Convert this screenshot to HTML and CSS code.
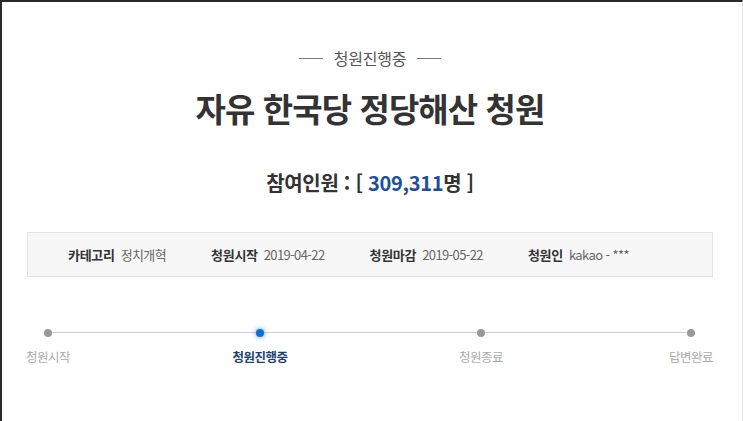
FILE: index.html
```html
<!DOCTYPE html>
<html lang="ko">
<head>
<meta charset="utf-8">
<title>청원진행중</title>
<link rel="stylesheet" href="styles.css">
</head>
<body>
<div class="frame">
  <div class="status"><span class="dash"></span><span class="status-text">청원진행중</span><span class="dash"></span></div>
  <h1 class="title">자유 한국당 정당해산 청원</h1>
  <p class="count">참여인원 : [ <span class="num">309,311</span>명 ]</p>
  <div class="info">
    <div class="item"><span class="lbl">카테고리</span><span class="val">정치개혁</span></div>
    <div class="item"><span class="lbl">청원시작</span><span class="val">2019-04-22</span></div>
    <div class="item"><span class="lbl">청원마감</span><span class="val">2019-05-22</span></div>
    <div class="item"><span class="lbl">청원인</span><span class="val">kakao - ***</span></div>
  </div>
  <div class="timeline">
    <div class="step"><span class="dot"></span><span class="step-lbl">청원시작</span></div>
    <div class="step step-2 active"><span class="dot"></span><span class="step-lbl">청원진행중</span></div>
    <div class="step step-3"><span class="dot"></span><span class="step-lbl">청원종료</span></div>
    <div class="step step-4"><span class="dot"></span><span class="step-lbl">답변완료</span></div>
  </div>
</div>
</body>
</html>
```
FILE: styles.css
```css
html, body {
  margin: 0;
  padding: 0;
  background: #fff;
}
body {
  font-family: "Noto Sans CJK KR", "Noto Sans", sans-serif;
  color: #333;
}
.frame {
  box-sizing: border-box;
  width: 743px;
  height: 421px;
  border-top: 2px solid #2a2a2a;
  border-left: 2px solid #2a2a2a;
  border-right: 1px solid #e6e6e6;
  padding-top: 46px;
  overflow: hidden;
}
.status {
  display: flex;
  justify-content: center;
  align-items: center;
  gap: 11px;
  height: 20px;
  margin-left: -4px;
}
.dash {
  width: 24px;
  height: 1px;
  background: #777;
}
.status-text {
  font-size: 16px;
  line-height: 20px;
  color: #555;
  letter-spacing: -0.2px;
}
.title {
  margin: 20px 0 0;
  text-align: center;
  font-size: 33px;
  line-height: 40px;
  font-weight: 700;
  color: #333;
  letter-spacing: -0.9px;
  margin-left: -4px;
}
.count {
  margin: 41px 0 0;
  text-align: center;
  font-size: 20px;
  line-height: 28px;
  font-weight: 700;
  color: #333;
  letter-spacing: -0.3px;
  margin-left: -4px;
}
.num {
  color: #1c4f9e;
}
.info {
  box-sizing: border-box;
  margin: 35px 0 0 25px;
  width: 686px;
  height: 45px;
  background: #f7f7f7;
  border: 1px solid #e3e3e3;
  display: flex;
  align-items: center;
  gap: 45px;
  padding-left: 40px;
  font-size: 13px;
  letter-spacing: -0.3px;
}
.item {
  display: flex;
  gap: 6px;
  align-items: baseline;
}
.lbl {
  font-weight: 700;
  color: #333;
}
.val {
  color: #666;
  letter-spacing: -0.6px;
}
.timeline {
  position: relative;
  display: flex;
  margin: 52px 0 0 16px;
}
.timeline::before {
  content: "";
  position: absolute;
  left: 30px;
  width: 643px;
  top: 3px;
  height: 1px;
  background: #cfcfcf;
}
.step {
  position: relative;
  width: 60px;
  display: flex;
  flex-direction: column;
  align-items: center;
  gap: 11px;
}
.step-2 { margin-left: 152px; }
.step-3 { margin-left: 161px; }
.step-4 { margin-left: 150px; }
.dot {
  width: 8px;
  height: 8px;
  border-radius: 50%;
  background: #999;
}
.step-lbl {
  font-size: 12.5px;
  line-height: 18px;
  color: #aaa;
  letter-spacing: -0.5px;
  white-space: nowrap;
}
.active .dot {
  background: #0b6fd6;
  box-shadow: 0 0 4px 1px rgba(60, 150, 240, 0.6);
}
.active .step-lbl {
  color: #213f6f;
  font-weight: 700;
}
```
